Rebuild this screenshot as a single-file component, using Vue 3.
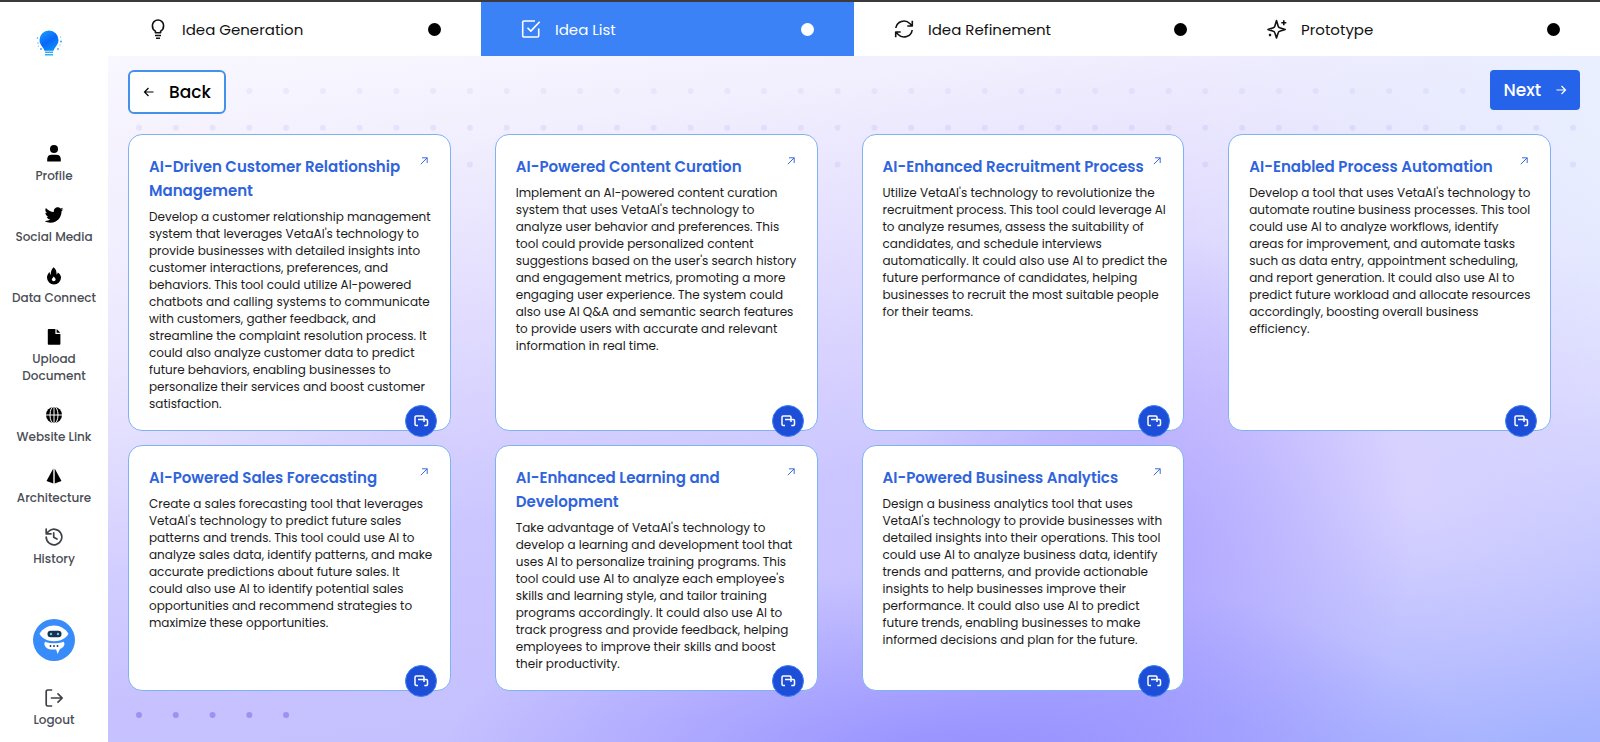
<script setup>
import { ref } from 'vue'

const activeTab = ref('Idea List')

const tabs = ['Idea Generation', 'Idea List', 'Idea Refinement', 'Prototype']

const menu = [
    { icon: 'profile', label: 'Profile' },
    { icon: 'twitter', label: 'Social Media' },
    { icon: 'fire', label: 'Data Connect' },
    { icon: 'file', label: 'Upload Document' },
    { icon: 'globe', label: 'Website Link' },
    { icon: 'prism', label: 'Architecture' },
    { icon: 'history', label: 'History' },
]

const ideas = [
    {
        title: 'AI-Driven Customer Relationship Management',
        text: `Develop a customer relationship management
system that leverages VetaAI's technology to
provide businesses with detailed insights into
customer interactions, preferences, and
behaviors. This tool could utilize AI-powered
chatbots and calling systems to communicate
with customers, gather feedback, and
streamline the complaint resolution process. It
could also analyze customer data to predict
future behaviors, enabling businesses to
personalize their services and boost customer
satisfaction.`,
    },
    {
        title: 'AI-Powered Content Curation',
        text: `Implement an AI-powered content curation
system that uses VetaAI's technology to
analyze user behavior and preferences. This
tool could provide personalized content
suggestions based on the user's search history
and engagement metrics, promoting a more
engaging user experience. The system could
also use AI Q&A and semantic search features
to provide users with accurate and relevant
information in real time.`,
    },
    {
        title: 'AI-Enhanced Recruitment Process',
        text: `Utilize VetaAI's technology to revolutionize the
recruitment process. This tool could leverage AI
to analyze resumes, assess the suitability of
candidates, and schedule interviews
automatically. It could also use AI to predict the
future performance of candidates, helping
businesses to recruit the most suitable people
for their teams.`,
    },
    {
        title: 'AI-Enabled Process Automation',
        text: `Develop a tool that uses VetaAI's technology to
automate routine business processes. This tool
could use AI to analyze workflows, identify
areas for improvement, and automate tasks
such as data entry, appointment scheduling,
and report generation. It could also use AI to
predict future workload and allocate resources
accordingly, boosting overall business
efficiency.`,
    },
    {
        title: 'AI-Powered Sales Forecasting',
        text: `Create a sales forecasting tool that leverages
VetaAI's technology to predict future sales
patterns and trends. This tool could use AI to
analyze sales data, identify patterns, and make
accurate predictions about future sales. It
could also use AI to identify potential sales
opportunities and recommend strategies to
maximize these opportunities.`,
    },
    {
        title: 'AI-Enhanced Learning and Development',
        text: `Take advantage of VetaAI's technology to
develop a learning and development tool that
uses AI to personalize training programs. This
tool could use AI to analyze each employee's
skills and learning style, and tailor training
programs accordingly. It could also use AI to
track progress and provide feedback, helping
employees to improve their skills and boost
their productivity.`,
    },
    {
        title: 'AI-Powered Business Analytics',
        text: `Design a business analytics tool that uses
VetaAI's technology to provide businesses with
detailed insights into their operations. This tool
could use AI to analyze business data, identify
trends and patterns, and provide actionable
insights to help businesses improve their
performance. It could also use AI to predict
future trends, enabling businesses to make
informed decisions and plan for the future.`,
    },
]

// dotted rows of the backdrop: [row, first column, last column, opacity]
const dotRows = [
    [0, 0, 36, 0.08],
    [1, 0, 39, 0.1],
    [2, 9, 39, 0.1],
    [17, 0, 4, 0.5],
]
const dots = dotRows.flatMap(([row, from, to, opacity]) =>
    Array.from({ length: to - from + 1 }, (_, i) => ({
        x: 31 + (from + i) * 36.77,
        y: 35 + row * 36.7,
        opacity,
    }))
)
</script>

<template>
    <div class="page">
        <aside class="sidebar">
            <svg class="logo" viewBox="0 0 28 28" aria-hidden="true">
                <defs>
                    <linearGradient id="bulb" x1="0" y1="0" x2="0.6" y2="1">
                        <stop offset="0" stop-color="#19a4fb" />
                        <stop offset="0.6" stop-color="#0a66fb" />
                        <stop offset="1" stop-color="#0a8cf5" />
                    </linearGradient>
                </defs>
                <path fill="url(#bulb)" d="M14 1.500a9.500 9.500 0 0 0-9.500 9.500c0 3.600 1.900 5.600 3.300 7.400.9 1.200 1.500 2.200 1.700 3.300h9c.2-1.100.8-2.100 1.700-3.300 1.400-1.800 3.300-3.800 3.300-7.400A9.500 9.500 0 0 0 14 1.500z" />
                <path fill="#2cb0f2" d="M10 22.5h8v1.6h-8zM10 24.900h8v1.600h-8z" />
                <g fill="#39a9f5">
                    <circle cx="2.5" cy="9" r=".8" /><circle cx="3" cy="14" r=".7" />
                    <circle cx="26" cy="12.5" r="1" /><circle cx="25.500" cy="8" r=".6" />
                    <circle cx="6" cy="20" r="1" /><circle cx="23" cy="20" r=".9" />
                    <circle cx="3.5" cy="17" r=".6" /><circle cx="25" cy="16" r=".6" />
                </g>
            </svg>

            <nav class="menu">
                <a v-for="item in menu" :key="item.label" href="#" class="menu-item">
                    <svg v-if="item.icon === 'profile'" viewBox="0 0 20 20" fill="currentColor">
                        <circle cx="10" cy="5" r="4" />
                        <path d="M3.2 17.5V15a4.5 4.5 0 0 1 4.5-4.3h4.6a4.5 4.5 0 0 1 4.5 4.3v2.5z" />
                    </svg>
                    <svg v-else-if="item.icon === 'twitter'" viewBox="-16 -16 544 544" fill="currentColor">
                        <path d="M459.37 151.716c.325 4.548.325 9.097.325 13.645 0 138.72-105.583 298.558-298.558 298.558-59.452 0-114.68-17.219-161.137-47.106 8.447.974 16.568 1.299 25.34 1.299 49.055 0 94.213-16.568 130.274-44.832-46.132-.975-84.792-31.188-98.112-72.772 6.498.974 12.995 1.624 19.818 1.624 9.421 0 18.843-1.3 27.614-3.573-48.081-9.747-84.143-51.98-84.143-102.985v-1.299c13.969 7.797 30.214 12.67 47.431 13.319-28.264-18.843-46.781-51.005-46.781-87.391 0-19.492 5.197-37.36 14.294-52.954 51.655 63.675 129.3 105.258 216.365 109.807-1.624-7.797-2.599-15.918-2.599-24.04 0-57.828 46.782-104.934 104.934-104.934 30.213 0 57.502 12.67 76.67 33.137 23.715-4.548 46.456-13.32 66.599-25.34-7.798 24.366-24.366 44.833-46.132 57.827 21.117-2.273 41.584-8.122 60.426-16.243-14.292 20.791-32.161 39.308-52.628 54.253z" />
                    </svg>
                    <svg v-else-if="item.icon === 'fire'" viewBox="0 0 20 20" fill="currentColor" fill-rule="evenodd">
                        <path d="M9.500 1.200c2.600 1.800 3.200 4.200 3 7.300.7-.4 1.100-1.100 1.300-2 2 1.400 3.200 3.200 3.200 5.100a7 7 0 0 1-14 0c0-2.300 1.200-4.200 2.600-5.500.1 1.300.4 2.200 1 2.900C6.800 5.900 7.300 3.300 9.500 1.200zM9.600 10.500c-.2 1.300-1.800 1.700-1.800 3.100a2 2 0 0 0 3.900.2c.1-1.300-1.200-2.200-2.100-3.300z" />
                    </svg>
                    <svg v-else-if="item.icon === 'file'" viewBox="0 0 20 20" fill="currentColor">
                        <path d="M3.8 2.8a.8.8 0 0 1 .8-.8h6.8v5h5v10a.8.8 0 0 1-.8.8h-11a.8.8 0 0 1-.8-.8z" />
                        <path d="M12.6 2 16.4 5.8h-3.8z" />
                    </svg>
                    <svg v-else-if="item.icon === 'globe'" viewBox="0 0 20 20">
                        <circle cx="10" cy="10" r="8" fill="currentColor" />
                        <g fill="none" stroke="#fff" stroke-width="1">
                            <ellipse cx="10" cy="10" rx="4" ry="8.6" />
                            <path d="M1.5 10h17M10 1.5v17" />
                        </g>
                    </svg>
                    <svg v-else-if="item.icon === 'prism'" viewBox="0 0 20 20" fill="currentColor">
                        <path d="M9.3 2.5v15L2.5 15zM10.7 2.5v15l6.8-2.5z" />
                    </svg>
                    <svg v-else viewBox="0 0 20 20" class="line">
                        <path d="M2.2 10a7.8 7.8 0 1 0 2.3-5.5L2.2 6.8M2.2 2v4.8H7M9.7 5.8v4.5l3.3 1.8" />
                    </svg>
                    <span>{{ item.label }}</span>
                </a>
            </nav>

            <button class="bot" aria-label="Assistant">
                <svg viewBox="0 0 42 42">
                    <circle cx="21" cy="21" r="21" fill="#378cf9" />
                    <path fill="#fff" d="M21 6.5c6 0 11.500 3.200 14.500 8.300-2.600 5-8.200 7.400-14.500 7.400s-12-2.400-14.500-7.400C9.500 9.700 15 6.500 21 6.500z" />
                    <rect x="14.5" y="11.8" width="14" height="6.5" rx="3.2" fill="#16324f" />
                    <circle cx="18" cy="15" r="1.2" fill="#4fd5f7" /><circle cx="25" cy="15" r="1.2" fill="#4fd5f7" />
                    <path fill="#fff" d="M12 22.800c5.500 2 12.500 2 18.500 0 2.500 2.700-.3 6.200-3.500 7.200L24.500 35l-1.300-4.500h-5.400c-3.700 0-8-4-5.800-7.700z" />
                    <g fill="#16324f"><circle cx="17.5" cy="27" r=".9" /><circle cx="21" cy="27" r=".9" /><circle cx="24.5" cy="27" r=".9" /></g>
                </svg>
            </button>

            <a href="#" class="menu-item">
                <svg viewBox="0 0 20 20" class="line">
                    <path d="M7.5 2H3.8a1.6 1.6 0 0 0-1.6 1.6v12.8A1.6 1.6 0 0 0 3.8 18h3.7M7.5 10H18M14 5.8l4.2 4.2-4.2 4.2" />
                </svg>
                <span>Logout</span>
            </a>
        </aside>

        <main class="main">
            <nav class="tabs">
                <button
                    v-for="tab in tabs"
                    :key="tab"
                    class="tab"
                    :class="{ active: tab === activeTab }"
                    @click="activeTab = tab"
                >
                    <svg v-if="tab === 'Idea Generation'" viewBox="0 0 20 20" class="tab-icon">
                        <path d="M7.4 13.8v-1.6C5.4 11.2 4.4 9 4.4 6.6a5.6 5.6 0 0 1 11.2 0c0 2.400-1 4.600-3 5.600v1.600zM7 16.500h6M8 19.200h4" />
                    </svg>
                    <svg v-else-if="tab === 'Idea List'" viewBox="0 0 20 20" class="tab-icon">
                        <path d="M17.7 9.5v7.2a1.3 1.3 0 0 1-1.3 1.3H3A1.3 1.3 0 0 1 1.7 16.700V3.300A1.300 1.300 0 0 1 3 2h11M6.500 8.800l3.300 3.300 8.900-9.300" />
                    </svg>
                    <svg v-else-if="tab === 'Idea Refinement'" viewBox="0 0 20 20" class="tab-icon">
                        <path d="M1.8 9a8.2 8.2 0 0 1 14-4.5L18.3 7M18.3 1.8V7h-5M18.2 11a8.2 8.2 0 0 1-14 4.5L1.700 13M1.700 18.200V13h5" />
                    </svg>
                    <svg v-else viewBox="0 0 20 20" class="tab-icon">
                        <path d="M9.5 1.5l1.700 5.800c.2.700.7 1.200 1.400 1.400l5.600 1.800-5.600 1.800c-.7.2-1.200.7-1.400 1.400L9.500 19l-1.700-5.300c-.2-.7-.7-1.200-1.400-1.400L1 10.500l5.400-1.800c.7-.2 1.200-.7 1.400-1.400zM16.800 1.200v5M14.300 3.700h5M3 14.800v2.400M1.800 16h2.400" />
                    </svg>
                    <span>{{ tab }}</span>
                    <i class="dot"></i>
                </button>
            </nav>

            <section class="board">
                <svg class="backdrop" aria-hidden="true">
                    <circle v-for="(d, i) in dots" :key="i" :cx="d.x" :cy="d.y" r="3" fill="#7460e8" :opacity="d.opacity" />
                </svg>

                <div class="toolbar">
                    <button class="back">
                        <svg viewBox="0 0 12 12" class="arrow"><path d="M10.5 6h-9M5.500 2l-4 4 4 4" /></svg>
                        Back
                    </button>
                    <button class="next">
                        Next
                        <svg viewBox="0 0 12 12" class="arrow"><path d="M1.5 6h9M6.500 2l4 4-4 4" /></svg>
                    </button>
                </div>

                <div class="ideas">
                    <article v-for="idea in ideas" :key="idea.title" class="card">
                        <header class="card-head">
                            <h2>{{ idea.title }}</h2>
                            <a href="#" class="open" :aria-label="'Open ' + idea.title">
                                <svg viewBox="0 0 10 10"><path d="M1 9l8-8M2.500 1H9v6.500" /></svg>
                            </a>
                        </header>
                        <p>{{ idea.text }}</p>
                        <button class="chat" :aria-label="'Discuss ' + idea.title">
                            <svg viewBox="0 0 16 16">
                                <path d="M5 12.500H3.200A1.200 1.200 0 0 1 2 11.300V4.200A1.200 1.200 0 0 1 3.200 3h6.600A1.200 1.200 0 0 1 11 4.200V9M5 6.500h8.300a1.200 1.200 0 0 1 1.200 1.200v3.600a1.200 1.200 0 0 1-1.200 1.200h-2" />
                            </svg>
                        </button>
                    </article>
                </div>
            </section>
        </main>
    </div>
</template>

<style>
    body {
        margin: 0;
    }
</style>

<style scoped>
    .page {
        display: flex;
        box-sizing: border-box;
        min-height: 100vh;
        border-top: 2px solid #3c3a3c;
        background: #fff;
        color: #1b1b1b;
        font-family: Poppins, Inter, sans-serif;
    }

    button {
        border: 0;
        padding: 0;
        background: none;
        font-family: inherit;
        cursor: pointer;
    }

    a {
        color: inherit;
        text-decoration: none;
    }

    .sidebar {
        display: flex;
        flex-direction: column;
        align-items: center;
        flex: none;
        width: 108px;
    }

    .logo {
        width: 28px;
        height: 28px;
        margin: 27px 10px 87px 0;
    }

    .menu {
        display: flex;
        flex-direction: column;
        gap: 21px;
    }

    .menu-item {
        display: flex;
        flex-direction: column;
        align-items: center;
        gap: 3px;
        max-width: 92px;
        color: #000;
    }

    .menu-item svg {
        width: 20px;
        height: 20px;
    }

    .menu-item span {
        color: #4a4d55;
        font-size: 12px;
        font-weight: 500;
        line-height: 17px;
        text-align: center;
    }

    .menu-item .line {
        fill: none;
        stroke: #3f4147;
        stroke-width: 1.7;
        stroke-linecap: round;
        stroke-linejoin: round;
    }

    .bot {
        width: 42px;
        height: 42px;
        margin: 52px 0 27px;
    }

    .bot svg {
        display: block;
    }

    .main {
        display: flex;
        flex-direction: column;
        flex: 1;
        min-width: 0;
    }

    .tabs {
        display: grid;
        grid-template-columns: repeat(4, 1fr);
    }

    .tab {
        display: flex;
        align-items: center;
        gap: 14px;
        height: 54px;
        padding: 0 40px;
        color: #111;
        font-size: 15px;
    }

    .tab.active {
        background: #3b82f6;
        color: #fff;
    }

    .tab-icon {
        width: 20px;
        height: 20px;
        fill: none;
        stroke: currentColor;
        stroke-width: 1.6;
        stroke-linejoin: round;
    }

    .dot {
        width: 13px;
        height: 13px;
        margin-left: auto;
        border-radius: 50%;
        background: #000;
    }

    .active .dot {
        background: #fff;
    }

    .board {
        position: relative;
        flex: 1;
        padding: 14px 20px 40px;
        background:
            radial-gradient(ellipse 520px 200px at 57% 104%, rgba(142, 136, 255, 0.9), rgba(142, 136, 255, 0) 100%),
            radial-gradient(ellipse 260px 320px at 70% 72%, rgba(168, 154, 255, 0.7), rgba(168, 154, 255, 0) 100%),
            radial-gradient(ellipse 360px 260px at 87% 64%, rgba(222, 214, 255, 0.75), rgba(222, 214, 255, 0) 100%),
            radial-gradient(ellipse 720px 380px at 98% 104%, rgba(162, 178, 255, 1), rgba(162, 178, 255, 0) 100%),
            radial-gradient(ellipse 480px 640px at 104% 6%, rgba(234, 241, 255, 1), rgba(234, 241, 255, 0) 100%),
            radial-gradient(ellipse 300px 460px at 0% 26%, rgba(246, 243, 255, 0.6), rgba(246, 243, 255, 0) 100%),
            linear-gradient(172deg, #faf9ff 0%, #f2effe 14%, #e2ddfe 34%, #cbc6ff 58%, #c0bcff 100%);
    }

    .backdrop {
        position: absolute;
        top: 0;
        left: 0;
        width: 100%;
        height: 100%;
        pointer-events: none;
    }

    .toolbar {
        position: relative;
        display: flex;
        align-items: flex-start;
        justify-content: space-between;
        margin-bottom: 20px;
    }

    .back,
    .next {
        display: flex;
        align-items: center;
        gap: 14px;
        height: 44px;
        padding: 0 13px;
        border: 2px solid #4391ea;
        border-radius: 6px;
        background: #fff;
        color: #000;
        font-size: 17px;
        font-weight: 500;
    }

    .next {
        height: 40px;
        border: 0;
        border-radius: 4px;
        background: #2563eb;
        color: #fff;
    }

    .arrow {
        width: 12px;
        height: 12px;
        fill: none;
        stroke: currentColor;
        stroke-width: 1.2;
    }

    .ideas {
        position: relative;
        display: grid;
        grid-template-columns: repeat(4, 1fr);
        gap: 14px 44px;
        padding-right: 29px;
    }

    .card {
        position: relative;
        padding: 20px 12px 18px 20px;
        border: 1px solid #80b2f2;
        border-radius: 14px;
        background: #fff;
    }

    .card-head {
        display: flex;
        justify-content: space-between;
        margin: 0 8px 5px 0;
    }

    .card h2 {
        margin: 0;
        color: #3064dc;
        font-size: 15px;
        font-weight: 600;
        line-height: 24px;
    }

    .open {
        flex: none;
        width: 10px;
    }

    .open svg {
        display: block;
        width: 8px;
        height: 8px;
        margin-top: 2px;
        overflow: visible;
        fill: none;
        stroke: #3064dc;
        stroke-width: 1.2;
    }

    .card p {
        margin: 0;
        font-size: 12px;
        line-height: 17px;
        white-space: pre-line;
    }

    .chat {
        position: absolute;
        right: 13px;
        bottom: -7px;
        display: flex;
        align-items: center;
        justify-content: center;
        width: 32px;
        height: 32px;
        border: 1px solid #3b82f6;
        border-radius: 50%;
        background: #1d4ed8;
    }

    .chat svg {
        width: 16px;
        height: 16px;
        fill: none;
        stroke: #fff;
        stroke-width: 1.5;
    }
</style>
